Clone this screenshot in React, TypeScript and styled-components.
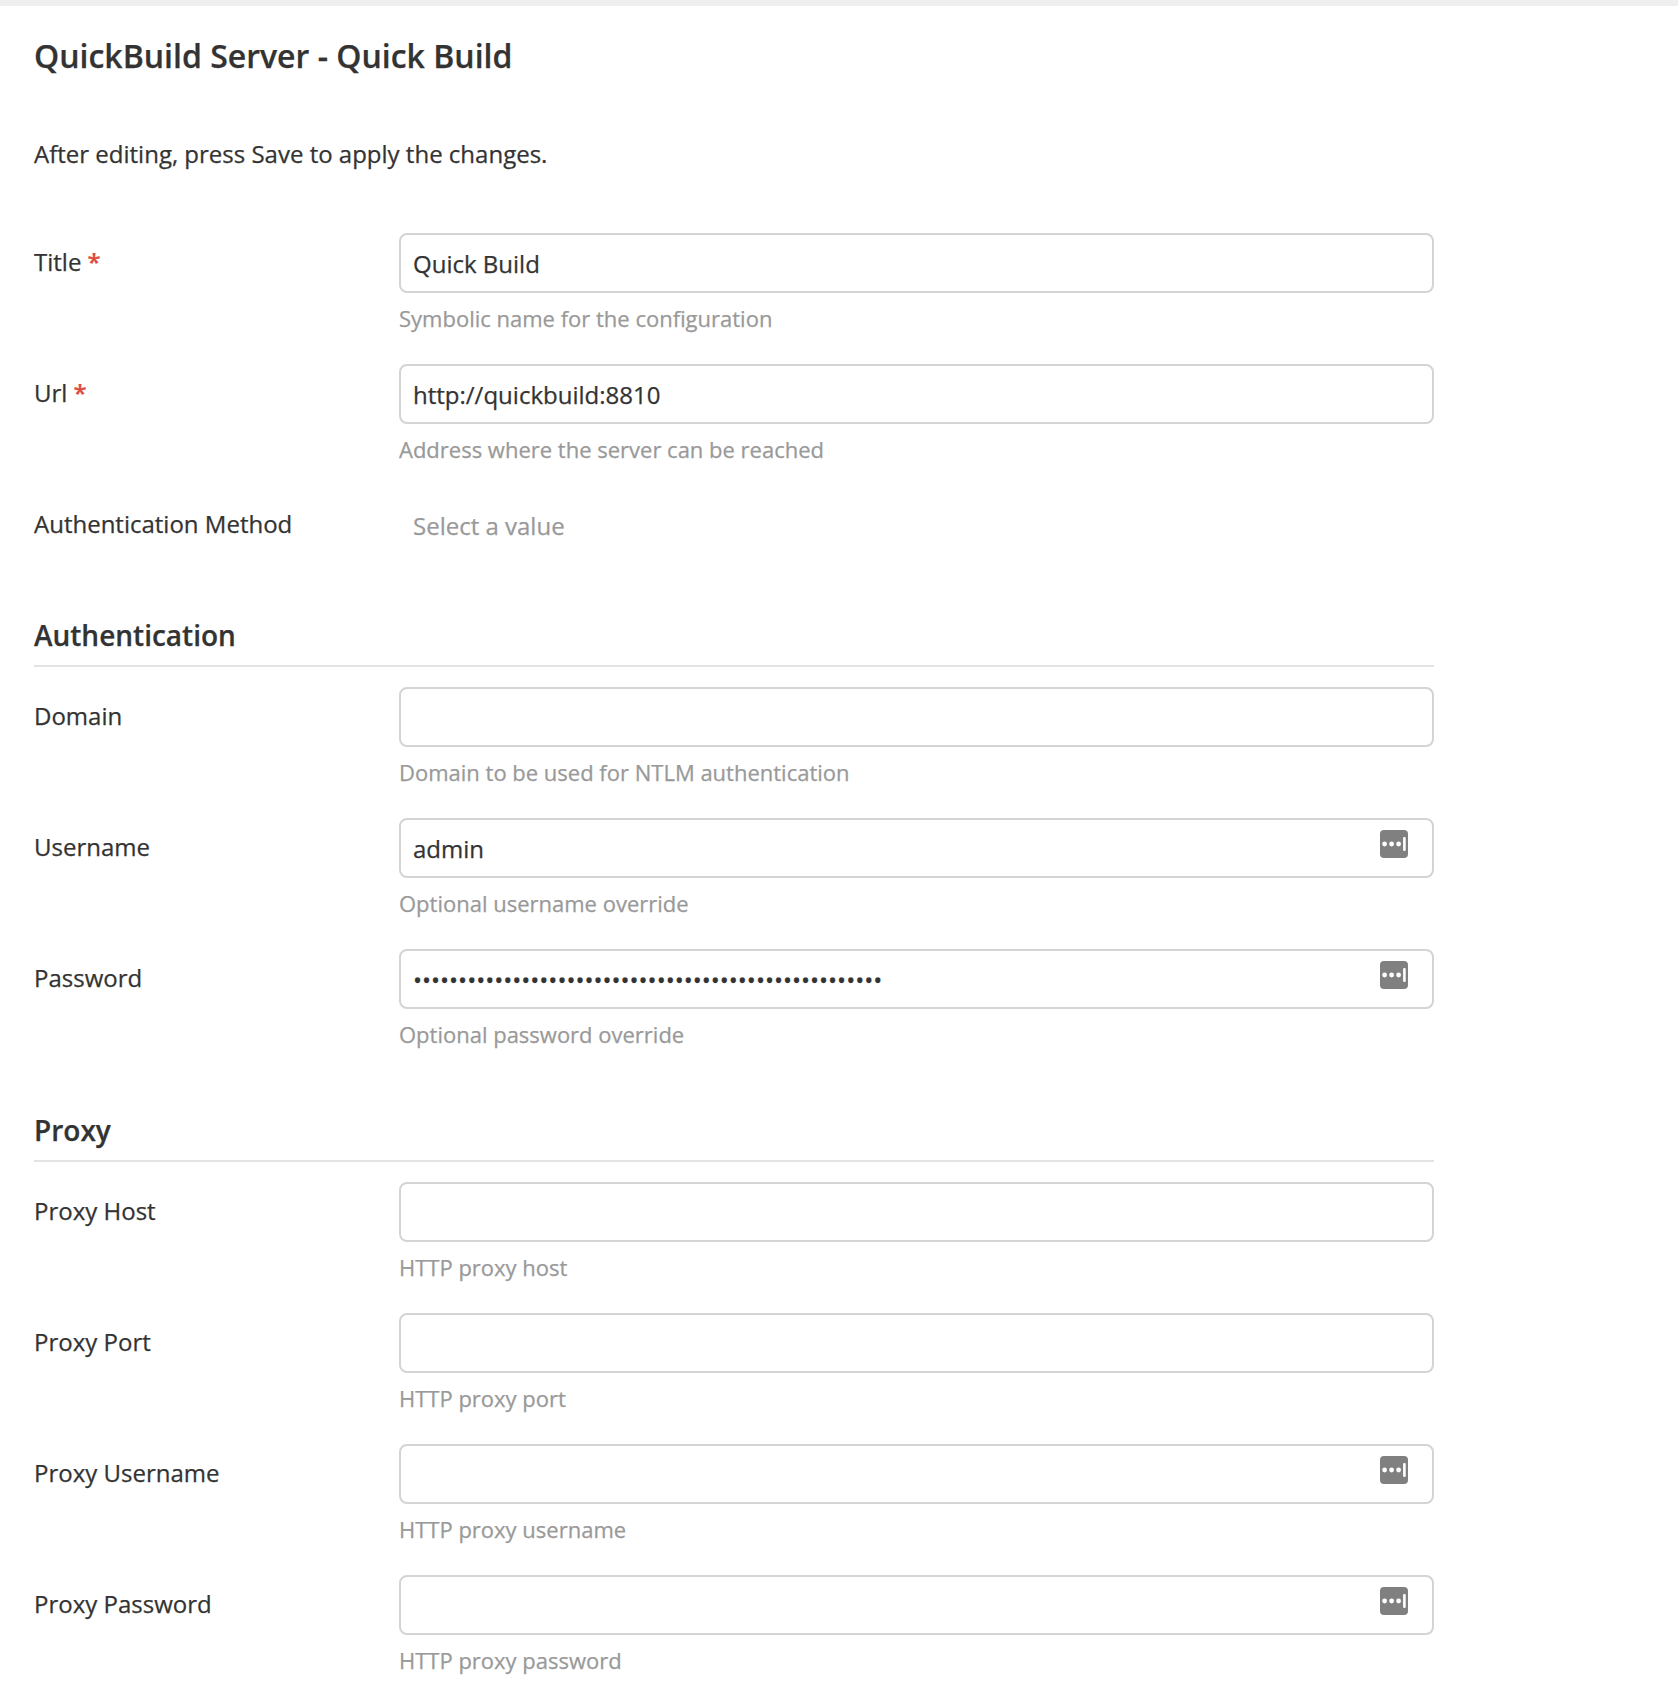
import React from "react";
import styled, { createGlobalStyle } from "styled-components";

const GlobalStyle = createGlobalStyle`
  *, *::before, *::after { box-sizing: border-box; }
  body {
    margin: 0;
    background: #fff;
    color: #333;
    font: 400 24px/34px "Open Sans", sans-serif;
    -webkit-text-stroke: 0.25px;
  }
`;

const Page = styled.main`
  height: 1702px;
  overflow: hidden;
  border-top: 6px solid #efefef;
  padding: 0 34px;
`;

const Form = styled.form`
  width: 1400px;
`;

const PageTitle = styled.h1`
  margin: 28px 0 0;
  font-size: 32px;
  font-weight: 600;
  line-height: 44px;
`;

const Intro = styled.p`
  margin: 59px 0 0;
  height: 96px;
`;

const Row = styled.div`
  display: grid;
  grid-template-columns: 365px 1fr;
  height: 131px;
`;

const Label = styled.label`
  padding-top: 12px;
`;

const Required = styled.span`
  margin-left: 6px;
  color: #de4a3c;
  font-weight: 600;
`;

const Control = styled.div`
  display: flex;
  height: 60px;
  padding-right: 24px;
  align-items: flex-start;
  border: 2px solid #d4d4d4;
  border-radius: 8px;
`;

const Input = styled.input`
  flex: 1;
  min-width: 0;
  height: 56px;
  border: 0;
  outline: 0;
  padding: 1px 12px 0;
  background: transparent;
  color: #333;
  font: inherit;
`;

const Placeholder = styled.div`
  height: 60px;
  padding: 14px 14px 0;
  color: #999;
`;

const Hint = styled.div`
  margin-top: 10px;
  color: #999;
  font-size: 22px;
  line-height: 30px;
`;

const SectionTitle = styled.h2<{ $space: number }>`
  margin: ${(p) => p.$space}px 0 20px;
  height: 52px;
  border-bottom: 2px solid #e4e4e4;
  font-size: 28px;
  font-weight: 600;
  line-height: 40px;
`;

const ManagerIcon = styled.svg`
  flex: none;
  width: 28px;
  height: 28px;
  margin-top: 10px;
`;

function PasswordManagerIcon() {
  return (
    <ManagerIcon viewBox="0 0 28 28" aria-hidden="true">
      <rect width="28" height="28" rx="4" fill="#808080" />
      <g fill="#fff">
        <circle cx="4.6" cy="14" r="2.4" />
        <circle cx="11.6" cy="14" r="2.4" />
        <circle cx="18.6" cy="14" r="2.4" />
        <rect x="23.1" y="7" width="2.6" height="14" rx="1.1" />
      </g>
    </ManagerIcon>
  );
}

interface FieldProps {
  label: string;
  hint: string;
  value?: string;
  required?: boolean;
  managed?: boolean;
}

function Field({ label, hint, value = "", required, managed }: FieldProps) {
  return (
    <Row>
      <Label htmlFor={label}>
        {label}
        {required && <Required>*</Required>}
      </Label>
      <div>
        <Control>
          <Input id={label} defaultValue={value} autoComplete="off" />
          {managed && <PasswordManagerIcon />}
        </Control>
        <Hint>{hint}</Hint>
      </div>
    </Row>
  );
}

export default function App() {
  return (
    <>
      <GlobalStyle />
      <Page>
        <Form>
          <PageTitle>QuickBuild Server - Quick Build</PageTitle>
          <Intro>After editing, press Save to apply the changes.</Intro>
          <Field label="Title" required value="Quick Build" hint="Symbolic name for the configuration" />
          <Field label="Url" required value="http://quickbuild:8810" hint="Address where the server can be reached" />
          <Row>
            <Label>Authentication Method</Label>
            <Placeholder>Select a value</Placeholder>
          </Row>
          <SectionTitle $space={-11}>Authentication</SectionTitle>
          <Field label="Domain" hint="Domain to be used for NTLM authentication" />
          <Field label="Username" value="admin" managed hint="Optional username override" />
          <Field label="Password" value={"•".repeat(52)} managed hint="Optional password override" />
          <SectionTitle $space={30}>Proxy</SectionTitle>
          <Field label="Proxy Host" hint="HTTP proxy host" />
          <Field label="Proxy Port" hint="HTTP proxy port" />
          <Field label="Proxy Username" managed hint="HTTP proxy username" />
          <Field label="Proxy Password" managed hint="HTTP proxy password" />
        </Form>
      </Page>
    </>
  );
}
